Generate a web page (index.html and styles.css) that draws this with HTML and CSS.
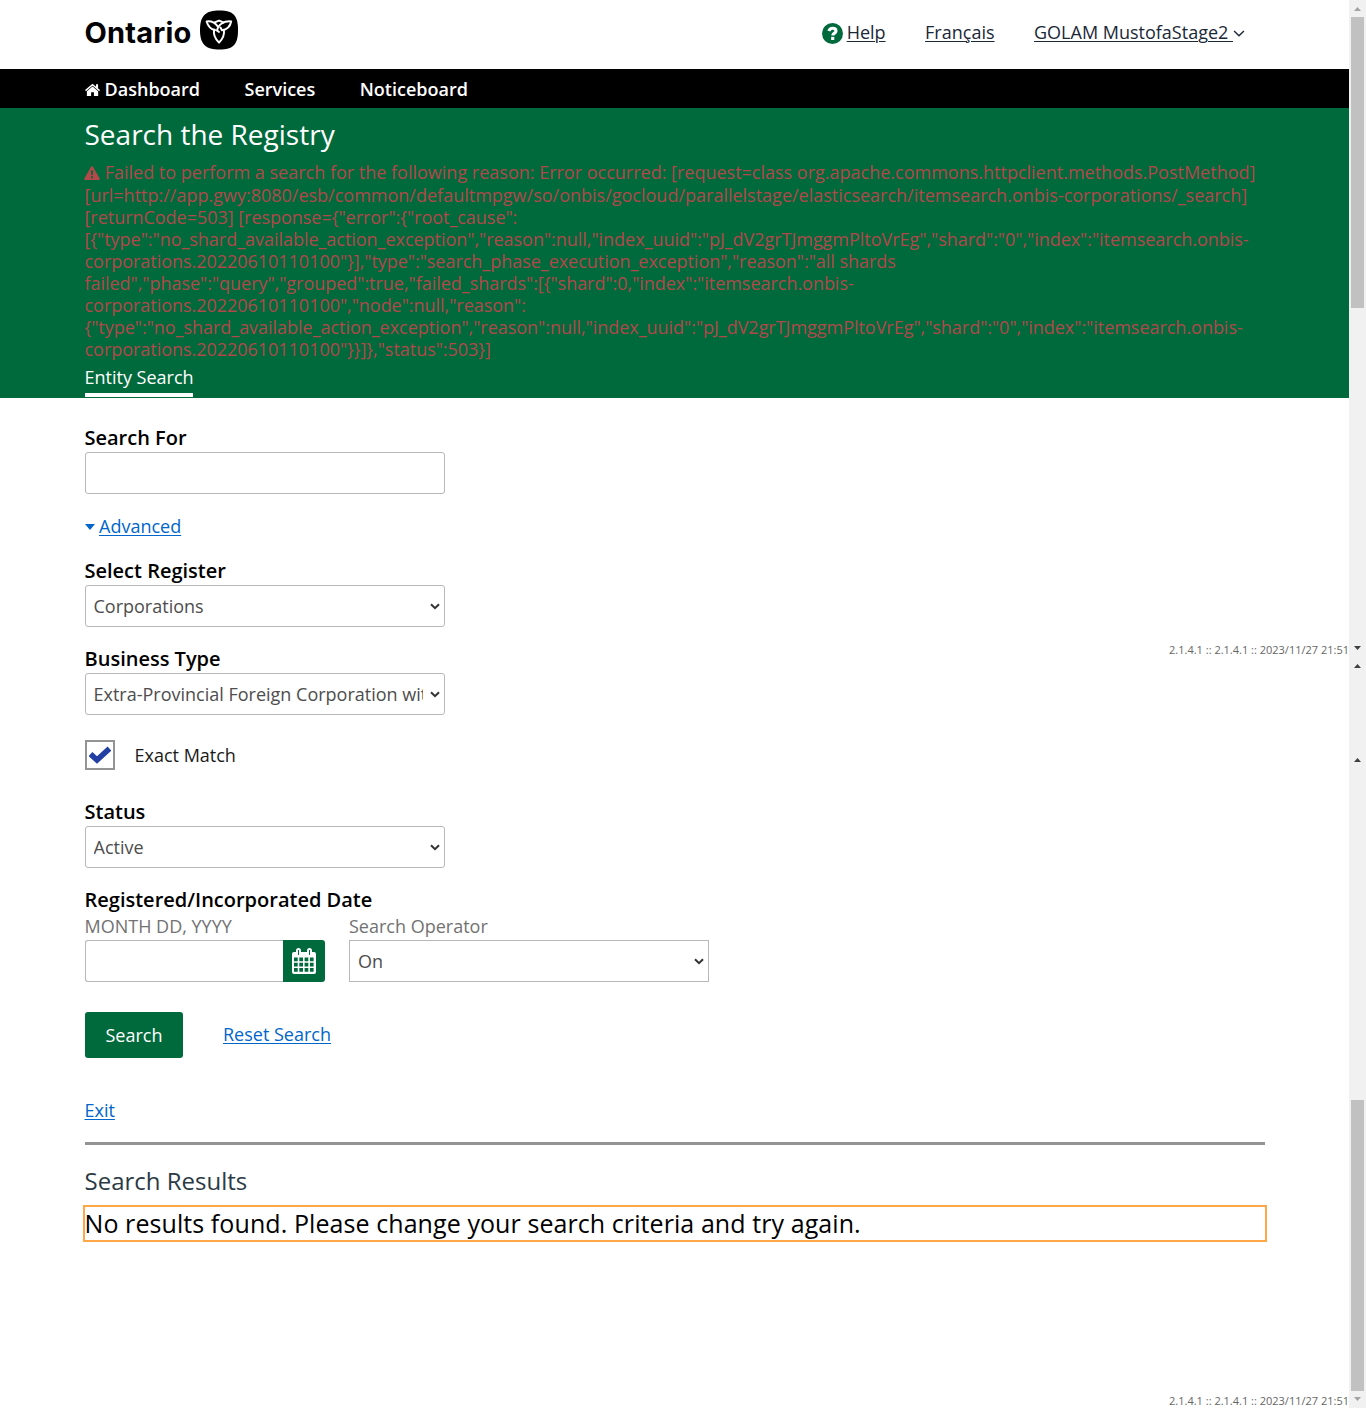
FILE: index.html
```html
<!DOCTYPE html>
<html lang="en">
<head>
<meta charset="utf-8">
<title>Search the Registry</title>
<link rel="stylesheet" href="styles.css">
</head>
<body>
<div class="page">
  <header class="top">
    <div class="brand">
      <span class="brand-name">Ontario</span>
      <svg class="brand-mark" viewBox="0 0 40 40"><path fill="#000" d="M20 0C34 0 39 5 39 20S34 40 20 40 0 35 0 20 6 0 20 0Z"/><g fill="none" stroke="#fff" stroke-width="2" stroke-linejoin="round" stroke-linecap="round"><path d="M15.500 20C10.500 19 8 15.500 6.800 11.200C11.500 10.500 15.500 12.500 18.300 16.500"/><path d="M15 12.200L19.500 10.300L24 12.200"/><path d="M17.500 20.500C18.500 14.500 24.500 10.500 32 11.200C31 15.800 28.200 19.500 22.500 20.300L21 17.500"/><path d="M14.500 19.800C13.500 24.500 15.500 29 19.500 33C23.500 29 25.300 24.800 24.500 20"/><path d="M17.500 20.500L19.500 22"/></g></svg>
    </div>
    <nav class="account">
      <span class="help"><svg class="help-icon" viewBox="0 0 20 20"><circle cx="10" cy="10" r="10" fill="#006a3d"/><path d="M6.500 7.600C7.200 5.600 8.500 5 10.100 5C12 5 13.300 6 13.300 7.500C13.300 9.800 10.300 9.500 10.300 12" fill="none" stroke="#fff" stroke-width="3"/><path fill="#fff" d="M8.700 13.200h3v3h-3z"/></svg><a>Help</a></span>
      <a>Français</a>
      <a>GOLAM MustofaStage2 <svg class="chev" viewBox="0 0 10 6"><path d="M.8.8L5 5L9.200.8" fill="none" stroke="#1a2838" stroke-width="1.200"/></svg></a>
    </nav>
  </header>
  <nav class="menu">
    <a class="home"><svg class="home-icon" viewBox="0 0 16 14"><path fill="#fff" d="M8 3.400L14 8.400V13.500H9.500V9.500H6.500v4H2V8.400z"/><path d="M.5 7.600L8 1.300L15.500 7.600" fill="none" stroke="#fff" stroke-width="1.600"/><path fill="#fff" d="M11.700 1h2.200v4.700l-2.200-1.800z"/></svg><span>Dashboard</span></a>
    <a>Services</a>
    <a>Noticeboard</a>
  </nav>
  <section class="banner">
    <h1>Search the Registry</h1>
    <p class="error"><svg class="warn" viewBox="0 0 16 14"><path fill="#b5484a" d="M7.100.8Q8-.6 8.900.8L15.800 12.700Q16 14 14.800 14H1.200Q0 14 .2 12.700z"/><path fill="#006a3d" d="M6.900 4.500h2.200L8.800 9H7.200zM7 10.200h2v2H7z"/></svg> <span class="raised">Failed to perform a search for the following reason: Error occurred: [request=class org.apache.commons.httpclient.methods.PostMethod]</span><br>[url=http://app.gwy:8080/esb/common/defaultmpgw/so/onbis/gocloud/parallelstage/elasticsearch/itemsearch.onbis-corporations/_search]<br><span class="json">[returnCode=503] [response={"error":{"root_cause":<br>[{"type":"no_shard_available_action_exception","reason":null,"index_uuid":"pJ_dV2grTJmggmPltoVrEg","shard":"0","index":"itemsearch.onbis-<br>corporations.20220610110100"}],"type":"search_phase_execution_exception","reason":"all shards<br>failed","phase":"query","grouped":true,"failed_shards":[{"shard":0,"index":"itemsearch.onbis-<br>corporations.20220610110100","node":null,"reason":<br>{"type":"no_shard_available_action_exception","reason":null,"index_uuid":"pJ_dV2grTJmggmPltoVrEg","shard":"0","index":"itemsearch.onbis-<br>corporations.20220610110100"}}]},"status":503}]</span></p>
    <a class="tab">Entity Search</a>
  </section>
  <main>
    <div class="field"><label>Search For</label><div class="box"></div></div>
    <div class="advanced"><i></i><a>Advanced</a></div>
    <div class="field"><label>Select Register</label><div class="box select"><span>Corporations</span><svg class="arrow" viewBox="0 0 10 7"><path d="M1 1.200L5 5.200L9 1.200"/></svg></div></div>
    <div class="field"><label>Business Type</label><div class="box select"><span>Extra-Provincial Foreign Corporation wit</span><svg class="arrow" viewBox="0 0 10 7"><path d="M1 1.200L5 5.200L9 1.200"/></svg></div></div>
    <div class="check-row"><span class="check"><svg viewBox="0 0 22 18"><path d="M1.500 8L8 14L20.500 2.500" fill="none" stroke="#233fa3" stroke-width="5.600"/></svg></span><span>Exact Match</span></div>
    <div class="field"><label>Status</label><div class="box select"><span>Active</span><svg class="arrow" viewBox="0 0 10 7"><path d="M1 1.200L5 5.200L9 1.200"/></svg></div></div>
    <div class="date-title">Registered/Incorporated Date</div>
    <div class="date-row">
      <div class="date"><div class="hint">MONTH DD, YYYY</div><div class="date-box"><div class="box"></div><span class="cal"><svg viewBox="0 0 24 26"><path fill="#fff" d="M2 4h2V3q0-3 2.500-3T9 3v1h6V3q0-3 2.500-3T20 3v1h2q2 0 2 2v18q0 2-2 2H2q-2 0-2-2V6q0-2 2-2z"/><path fill="#006a3d" d="M6 2h1v5H6zM17 2h1v5h-1zM2 9.500h3.700v3.800H2zm5.300 0H11v3.800H7.300zm5.300 0h3.700v3.800h-3.700zm5.300 0h3.700v3.800h-3.700zM2 14.700h3.700v3.800H2zm5.300 0H11v3.800H7.300zm5.300 0h3.700v3.800h-3.700zm5.300 0h3.700v3.800h-3.700zM2 19.900h3.700v3.800H2zm5.300 0H11v3.800H7.300zm5.300 0h3.700v3.800h-3.700zm5.300 0h3.700v3.800h-3.700z"/></svg></span></div></div>
      <div class="operator"><div class="hint">Search Operator</div><div class="box select"><span>On</span><svg class="arrow" viewBox="0 0 10 7"><path d="M1 1.200L5 5.200L9 1.200"/></svg></div></div>
    </div>
    <div class="actions"><button>Search</button><a>Reset Search</a></div>
    <a class="exit">Exit</a>
    <hr>
    <h2>Search Results</h2>
    <p class="empty">No results found. Please change your search criteria and try again.</p>
  </main>
  <div class="version">2.1.4.1 :: 2.1.4.1 :: 2023/11/27 21:51</div>
</div>
<div class="version middle">2.1.4.1 :: 2.1.4.1 :: 2023/11/27 21:51</div>
<aside class="rail">
  <svg class="light" viewBox="0 0 7 4"><path d="M0 4L3.500 0L7 4z"/></svg>
  <div class="thumb"></div>
  <svg viewBox="0 0 7 4"><path d="M0 0L3.500 4L7 0z"/></svg>
  <svg class="next" viewBox="0 0 7 4"><path d="M0 4L3.500 0L7 4z"/></svg>
  <svg class="far" viewBox="0 0 7 4"><path d="M0 4L3.500 0L7 4z"/></svg>
  <div class="thumb low"></div>
  <svg class="light" viewBox="0 0 7 4"><path d="M0 0L3.500 4L7 0z"/></svg>
</aside>
</body>
</html>
```
FILE: styles.css
```css
* { box-sizing: border-box; }
body { margin: 0; display: flex; height: 1408px; overflow: hidden; position: relative; background: #fff; color: #1a1a1a; font: 400 18px/24px "Open Sans", sans-serif; white-space: nowrap; text-indent: -0.5px; }
h1, h2, p { margin: 0; font-weight: 400; }
a { text-decoration: underline; text-underline-offset: 2px; text-decoration-thickness: 1px; }
.page { width: 1349px; display: flex; flex-direction: column; }
.top { height: 69px; padding: 10px 104px 0 85px; display: flex; justify-content: space-between; align-items: flex-start; }
.brand { display: flex; gap: 8px; }
.brand-name { width: 107px; font: 700 29px/45px Inter, sans-serif; letter-spacing: .2px; color: #000; }
.brand-mark { width: 39px; height: 40px; }
.account { display: flex; gap: 40px; padding-top: 10px; color: #1a2838; }
.help { display: flex; align-items: center; gap: 4px; }
.help-icon { width: 21px; height: 21px; margin-top: 2px; }
.chev { width: 12px; height: 7px; vertical-align: 2px; }
.menu { height: 39px; background: #000; color: #fff; padding: 8px 85px; display: flex; gap: 45px; font-weight: 600; }
.menu a { text-decoration: none; }
.home { display: flex; gap: 5px; width: 115px; }
.home-icon { width: 16px; height: 14px; margin-top: 6px; }
.banner { height: 290px; background: #006a3d; padding: 9px 85px 0; color: #fff; }
h1 { font-size: 28px; line-height: 34px; }
.error { margin: 10px 0 0 -0.5px; height: 200px; color: #b0484a; line-height: 22px; }
.raised { vertical-align: 1px; }
.json { letter-spacing: -0.03px; }
.warn { width: 16px; height: 14px; }
.tab { display: block; width: 108px; height: 32px; margin-top: 4px; border-bottom: 4px solid #fff; text-decoration: none; line-height: 25px; }
main { padding: 26px 0 0 85px; width: 1265px; height: 992px; display: flex; flex-direction: column; }
label { display: block; height: 28px; line-height: 28px; font-weight: 600; color: #000; font-size: 20px; }
.field { width: 360px; margin-bottom: 18px; }
.box { width: 360px; height: 42px; border: 1px solid #b8b8b8; border-radius: 3px; background: #fff; }
.select { display: flex; align-items: center; justify-content: space-between; padding: 0 4px 0 8px; color: #4d4d4d; }
.select span { width: 329px; overflow: hidden; line-height: 30px; }
.arrow { width: 10px; height: 7px; fill: none; stroke: #333; stroke-width: 2; }
.advanced { display: flex; align-items: center; gap: 5px; height: 24px; margin: 2px 0 19px -0.5px; color: #0066cc; }
.advanced i { border: 5px solid transparent; border-top: 6px solid #0066cc; border-bottom: 0; margin-top: 2px; }
.check-row { display: flex; align-items: center; gap: 20px; height: 30px; margin: 7px 0 28px; color: #1a1a1a; }
.check { width: 30px; height: 30px; border: 2px solid #949494; display: flex; align-items: center; justify-content: center; }
.check svg { width: 22px; height: 18px; flex: none; }
.date-title { height: 28px; line-height: 28px; font-size: 20px; font-weight: 600; color: #000; }
.date-row { display: flex; gap: 24px; }
.date { width: 240px; }
.hint { height: 26px; line-height: 24px; color: #727272; }
.date-box { display: flex; }
.date-box .box { width: 198px; border-right: 0; border-radius: 3px 0 0 3px; }
.cal { width: 42px; height: 42px; background: #006a3d; border-radius: 0 3px 3px 0; display: flex; align-items: center; justify-content: center; }
.cal svg { width: 24px; height: 26px; }
.operator { text-indent: 0; }
.operator .box { border-radius: 0; }
.actions { display: flex; align-items: center; gap: 40px; margin-top: 30px; color: #0066cc; text-indent: 0; }
.actions a { padding-bottom: 2px; }
button { width: 98px; height: 46px; padding: 0; border: 0; border-radius: 3px; background: #006a3d; color: #fff; font: 400 18px/24px "Open Sans", sans-serif; }
.exit { margin-top: 40px; color: #0066cc; line-height: 24px; align-self: flex-start; }
hr { width: 1180px; height: 3px; border: 0; background: #949494; margin: 20px 0; }
h2 { font-size: 24px; line-height: 32px; color: #2b3a44; }
.empty { margin: 8px -2px 0; height: 37px; border: 2px solid #ffa747; font-size: 25px; line-height: 33px; letter-spacing: .08px; color: #000; }
.version { height: 18px; font-size: 11px; line-height: 22px; color: #666; text-align: right; }
.middle { position: absolute; right: 17px; top: 639px; }
.rail { width: 17px; background: #f1f1f1; display: flex; flex-direction: column; align-items: center; padding-top: 7px; }
.rail svg { width: 7px; height: 4px; flex: none; fill: #404040; }
.rail .light { fill: #a3a3a3; }
.thumb { width: 13px; height: 291px; margin: 6px 0 338px; background: #c1c1c1; flex: none; }
.next { margin-top: 14px; }
.far { margin-top: 90px; }
.thumb.low { margin: 338px 0 6px; }
```
